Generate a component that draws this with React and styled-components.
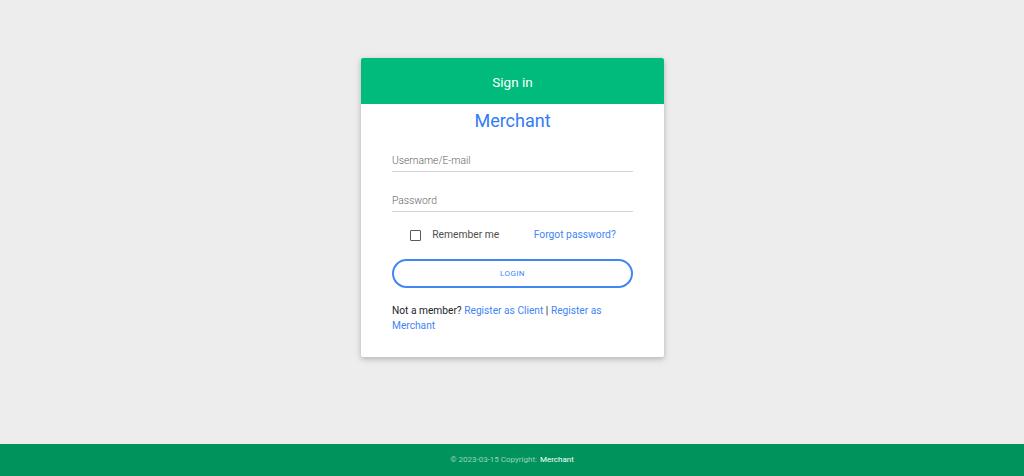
import React from 'react';
import styled, { createGlobalStyle } from 'styled-components';

const GlobalStyle = createGlobalStyle`
  html, body {
    margin: 0;
    padding: 0;
    background: #ededed;
    font-family: Roboto, "Liberation Sans", sans-serif;
  }
`;

const Page = styled.div`
  height: 476px;
  display: flex;
  flex-direction: column;
`;

const Main = styled.main`
  flex: 1;
  display: flex;
  justify-content: center;
  align-items: flex-start;
  padding-top: 58px;
  padding-left: 1px;
`;

const Card = styled.div`
  width: 303px;
  background: #fff;
  border-radius: 2px;
  overflow: hidden;
  box-shadow: 0 2px 5px 0 rgba(0, 0, 0, 0.16), 0 2px 8px 0 rgba(0, 0, 0, 0.1);
`;

const CardHeader = styled.div`
  height: 46px;
  background: #00bb7b;
  color: #fff;
  font-size: 13.5px;
  display: flex;
  align-items: center;
  justify-content: center;
  padding-top: 1px;
  box-sizing: border-box;
`;

const CardBody = styled.form`
  padding: 5px 31px 24px;
  display: flex;
  flex-direction: column;
`;

const Title = styled.h2`
  margin: 0 0 17px;
  font-size: 18px;
  line-height: 24px;
  font-weight: 400;
  text-align: center;
  color: #2f7cf6;
`;

const Input = styled.input`
  display: block;
  width: 100%;
  box-sizing: border-box;
  height: 22px;
  padding: 0 0 1px;
  margin-bottom: ${p => p.$gap || 0}px;
  border: none;
  border-bottom: 1px solid #ced4da;
  outline: none;
  font-family: inherit;
  font-size: 10.3px;
  font-weight: 300;
  color: #495057;
  background: transparent;
  &::placeholder {
    color: #5f5f5f;
  }
`;

const OptionsRow = styled.div`
  display: flex;
  justify-content: space-around;
  align-items: center;
  height: 16px;
  margin: 15px 0 16px;
  font-size: 10.3px;
  line-height: 16px;
`;

const CheckLabel = styled.label`
  display: flex;
  align-items: center;
  gap: 11px;
  padding-left: 1px;
  color: #4f4f4f;
`;

const CheckBox = styled.span`
  width: 9px;
  height: 9px;
  border: 1.5px solid #5a5a5a;
  border-radius: 1px;
`;

const Link = styled.a`
  color: #4285f4;
  text-decoration: none;
  cursor: pointer;
`;

const LoginButton = styled.button`
  height: 29px;
  width: 100%;
  border: 2px solid #4285f4;
  border-radius: 15px;
  background: #fff;
  color: #4285f4;
  font-family: inherit;
  font-size: 8px;
  letter-spacing: 0.4px;
  text-transform: uppercase;
  cursor: pointer;
`;

const Register = styled.p`
  margin: 15px 0 0;
  font-size: 10.2px;
  line-height: 15px;
  color: #212529;
`;

const Footer = styled.footer`
  height: 32px;
  background: #00935b;
  display: flex;
  align-items: center;
  justify-content: center;
  font-size: 8px;
  line-height: 10px;
  color: rgba(255, 255, 255, 0.6);
`;

const FooterLink = styled.a`
  color: #fff;
  margin-left: 3px;
  text-decoration: none;
`;

export default function App() {
  return (
    <>
      <GlobalStyle />
      <Page>
        <Main>
          <Card>
            <CardHeader>Sign in</CardHeader>
            <CardBody onSubmit={e => e.preventDefault()}>
              <Title>Merchant</Title>
              <Input type="text" placeholder="Username/E-mail" $gap={18} />
              <Input type="password" placeholder="Password" />
              <OptionsRow>
                <CheckLabel>
                  <CheckBox />
                  Remember me
                </CheckLabel>
                <Link>Forgot password?</Link>
              </OptionsRow>
              <LoginButton type="submit">Login</LoginButton>
              <Register>
                Not a member? <Link>Register as Client</Link> | <Link>Register as Merchant</Link>
              </Register>
            </CardBody>
          </Card>
        </Main>
        <Footer>
          © 2023-03-15 Copyright: <FooterLink>Merchant</FooterLink>
        </Footer>
      </Page>
    </>
  );
}
